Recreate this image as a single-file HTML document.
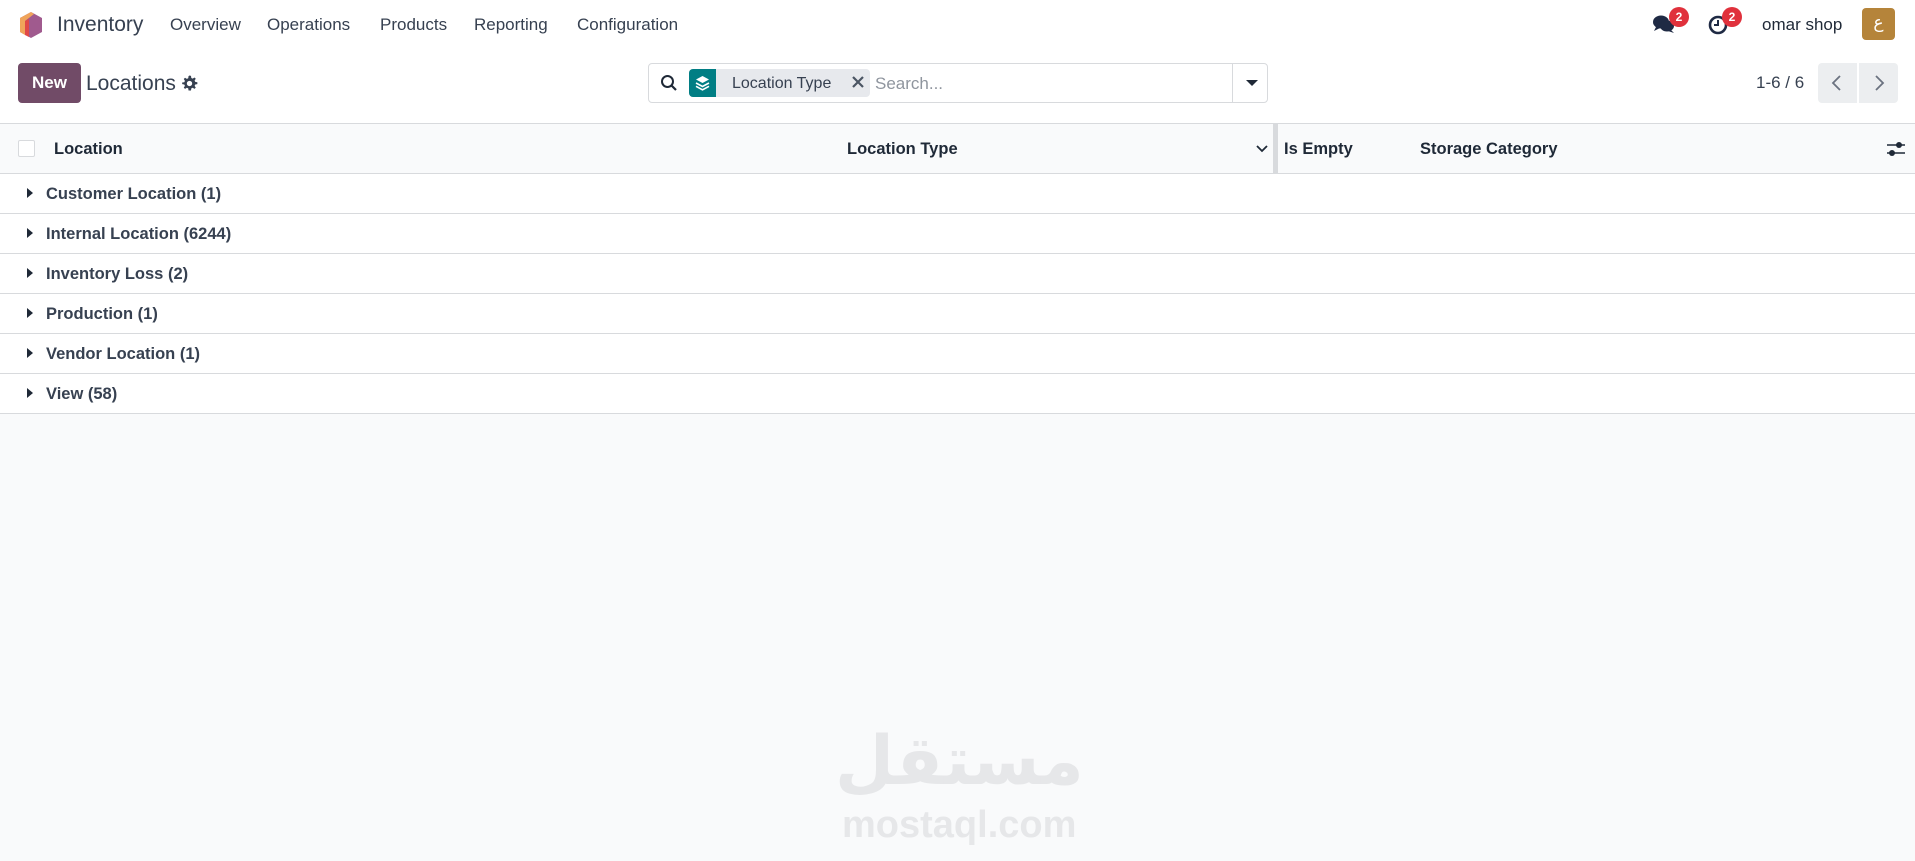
<!DOCTYPE html>
<html><head><meta charset="utf-8">
<style>
*{box-sizing:border-box;margin:0;padding:0}
html,body{width:1915px;height:861px;overflow:hidden;background:#f9fafb;font-family:"Liberation Sans","DejaVu Sans",sans-serif;color:#374151}
.nav{position:absolute;left:0;top:0;width:1915px;height:50px;background:#fff}
.nav span{position:absolute;top:15px;font-size:17px;color:#374151}
.ctrl{position:absolute;left:0;top:50px;width:1915px;height:73px;background:#fff}
.abs{position:absolute}
.hdr{position:absolute;left:0;top:123px;width:1915px;height:51px;background:#f9fafb;border-top:1px solid #d8dadd;border-bottom:1px solid #d8dadd}
.hdr b{position:absolute;top:16px;font-size:16.5px;color:#1f2937}
.row{position:absolute;left:0;width:1915px;height:40px;background:#fff;border-bottom:1px solid #d8dadd}
.row span{position:absolute;left:46px;top:11px;font-size:16.5px;font-weight:bold;color:#374151}
.row i{position:absolute;left:27px;top:14px;width:0;height:0;border-top:5px solid transparent;border-bottom:5px solid transparent;border-left:6px solid #1f2937}
.badge{position:absolute;width:20px;height:20px;border-radius:10px;background:#e0313c;color:#fff;font-size:12px;font-weight:bold;text-align:center;line-height:20px}
</style></head><body>
<div class="nav">
  <svg class="abs" style="left:18px;top:11px" width="26" height="28" viewBox="0 0 26 28">
    <path d="M13 1 L24 7 L24 21 L13 27 L2 21 L2 7Z" fill="#a05a8e"/>
    <path d="M13 1 L2 7 L2 21 L7 24 L7 10 L16 3Z" fill="#f0a45a"/>
    <path d="M7 10 L7 24 L11 26 L11 8Z" fill="#e04848"/>
  </svg>
  <span style="left:57px;top:13px;font-size:21px">Inventory</span>
  <span style="left:170px">Overview</span>
  <span style="left:267px">Operations</span>
  <span style="left:380px">Products</span>
  <span style="left:474px">Reporting</span>
  <span style="left:577px">Configuration</span>
  <svg class="abs" style="left:1652px;top:13px" width="24" height="22" viewBox="0 0 24 22">
    <ellipse cx="9" cy="9" rx="8" ry="6.5" fill="#1f2a44"/>
    <path d="M4 14 L2 18 L8 15Z" fill="#1f2a44"/>
    <ellipse cx="15" cy="13" rx="7" ry="5.5" fill="#1f2a44"/>
    <path d="M19 17 L22 20 L16 18Z" fill="#1f2a44"/>
  </svg>
  <div class="badge" style="left:1669px;top:7px">2</div>
  <svg class="abs" style="left:1708px;top:13px" width="22" height="22" viewBox="0 0 22 22">
    <circle cx="10" cy="12" r="8" fill="none" stroke="#1f2a44" stroke-width="2.6"/>
    <path d="M10 7 V12 H6" fill="none" stroke="#1f2a44" stroke-width="2"/>
  </svg>
  <div class="badge" style="left:1722px;top:7px">2</div>
  <span style="left:1762px;top:15px;font-size:17px;color:#1f2937">omar shop</span>
  <div class="abs" style="left:1862px;top:8px;width:33px;height:32px;border-radius:4px;background:#b5843a;color:#fff;text-align:center;line-height:30px;font-size:17px;font-family:'DejaVu Sans',sans-serif">ع</div>
</div>
<div class="ctrl">
  <div class="abs" style="left:18px;top:13px;width:63px;height:40px;background:#714b67;border-radius:4px;color:#fff;font-weight:bold;font-size:17px;text-align:center;line-height:40px">New</div>
  <div class="abs" style="left:86px;top:22px;font-size:21px;color:#374151">Locations</div>
  <svg class="abs" style="left:181px;top:25px" width="17" height="17" viewBox="0 0 16 16"><path fill="#374151" d="M8 0.5l1.4 0.3 0.3 2 1.3 0.6 1.7-1.1 1.2 1.2-1.1 1.7 0.6 1.3 2 0.3v1.8l-2 0.3-0.6 1.3 1.1 1.7-1.2 1.2-1.7-1.1-1.3 0.6-0.3 2H7.1l-0.3-2-1.3-0.6-1.7 1.1-1.2-1.2 1.1-1.7-0.6-1.3-2-0.3V7.1l2-0.3 0.6-1.3-1.1-1.7 1.2-1.200 1.7 1.1 1.3-0.6 0.3-2z M8 5.5a2.5 2.5 0 1 0 0.01 0z"/></svg>
  <div class="abs" style="left:648px;top:13px;width:620px;height:40px;background:#fff;border:1px solid #d8dadd;border-radius:4px">
    <svg class="abs" style="left:11px;top:10px" width="18" height="18" viewBox="0 0 18 18"><circle cx="7.5" cy="7.5" r="5.5" fill="none" stroke="#1f2937" stroke-width="2"/><path d="M11.5 11.5 L16 16" stroke="#1f2937" stroke-width="2.2"/></svg>
    <div class="abs" style="left:40px;top:5px;width:181px;height:28px;background:#e7e9ed;border-radius:4px"></div>
    <div class="abs" style="left:40px;top:5px;width:27px;height:28px;background:#017e84;border-radius:4px 0 0 4px">
      <svg class="abs" style="left:6px;top:6px" width="15" height="16" viewBox="0 0 15 16"><path d="M7.5 1L14 4.5 7.5 8 1 4.5Z" fill="#fff"/><path d="M1 8L7.5 11.5 14 8" fill="none" stroke="#fff" stroke-width="1.6"/><path d="M1 11.3L7.5 14.8 14 11.3" fill="none" stroke="#fff" stroke-width="1.6"/></svg>
    </div>
    <div class="abs" style="left:83px;top:11px;font-size:16px;color:#374151">Location Type</div>
    <svg class="abs" style="left:202px;top:11px" width="14" height="14" viewBox="0 0 14 14"><path d="M2 2L12 12M12 2L2 12" stroke="#4b5563" stroke-width="2.2"/></svg>
    <div class="abs" style="left:226px;top:10px;font-size:17px;color:#8f959e">Search...</div>
    <div class="abs" style="left:583px;top:0;width:1px;height:38px;background:#d8dadd"></div>
    <div class="abs" style="left:597px;top:16px;border-left:6px solid transparent;border-right:6px solid transparent;border-top:6px solid #1f2937"></div>
  </div>
  <div class="abs" style="left:1756px;top:23px;font-size:17px;color:#374151">1-6 / 6</div>
  <div class="abs" style="left:1818px;top:13px;width:39px;height:40px;background:#eceef0;border-radius:4px 0 0 4px"></div>
  <div class="abs" style="left:1859px;top:13px;width:39px;height:40px;background:#eceef0;border-radius:0 4px 4px 0"></div>
  <svg class="abs" style="left:1830px;top:24px" width="14" height="18" viewBox="0 0 14 18"><path d="M10 2 L3 9 L10 16" fill="none" stroke="#6b7280" stroke-width="1.8"/></svg>
  <svg class="abs" style="left:1872px;top:24px" width="14" height="18" viewBox="0 0 14 18"><path d="M4 2 L11 9 L4 16" fill="none" stroke="#6b7280" stroke-width="1.8"/></svg>
</div>
<div class="hdr">
  <div class="abs" style="left:18px;top:16px;width:17px;height:17px;border:1px solid #d8dadd;background:#fff;border-radius:2px"></div>
  <b style="left:54px">Location</b>
  <b style="left:847px">Location Type</b>
  <svg class="abs" style="left:1256px;top:20px" width="12" height="10" viewBox="0 0 12 10"><path d="M1 2 L6 7 L11 2" fill="none" stroke="#1f2937" stroke-width="1.8"/></svg>
  <div class="abs" style="left:1273px;top:0;width:5px;height:50px;background:#d8dadd"></div>
  <b style="left:1284px">Is Empty</b>
  <b style="left:1420px">Storage Category</b>
  <svg class="abs" style="left:1886px;top:16px" width="20" height="18" viewBox="0 0 20 18"><path d="M1 5H19M1 13H19" stroke="#1f2937" stroke-width="1.6"/><circle cx="13" cy="5" r="3" fill="#1f2937"/><circle cx="6" cy="13" r="3" fill="#1f2937"/></svg>
</div>
<div class="row" style="top:174px"><i></i><span>Customer Location (1)</span></div>
<div class="row" style="top:214px"><i></i><span>Internal Location (6244)</span></div>
<div class="row" style="top:254px"><i></i><span>Inventory Loss (2)</span></div>
<div class="row" style="top:294px"><i></i><span>Production (1)</span></div>
<div class="row" style="top:334px"><i></i><span>Vendor Location (1)</span></div>
<div class="row" style="top:374px"><i></i><span>View (58)</span></div>
<div class="abs" style="left:835px;top:722px;width:245px;text-align:center;font-size:68px;font-weight:bold;color:#e6e7e9;font-family:'DejaVu Sans',sans-serif;line-height:80px">مستقل</div>
<div class="abs" style="left:842px;top:803px;width:230px;text-align:center;font-size:38px;font-weight:bold;color:#e6e7e9;line-height:44px">mostaql.com</div>
</body></html>
